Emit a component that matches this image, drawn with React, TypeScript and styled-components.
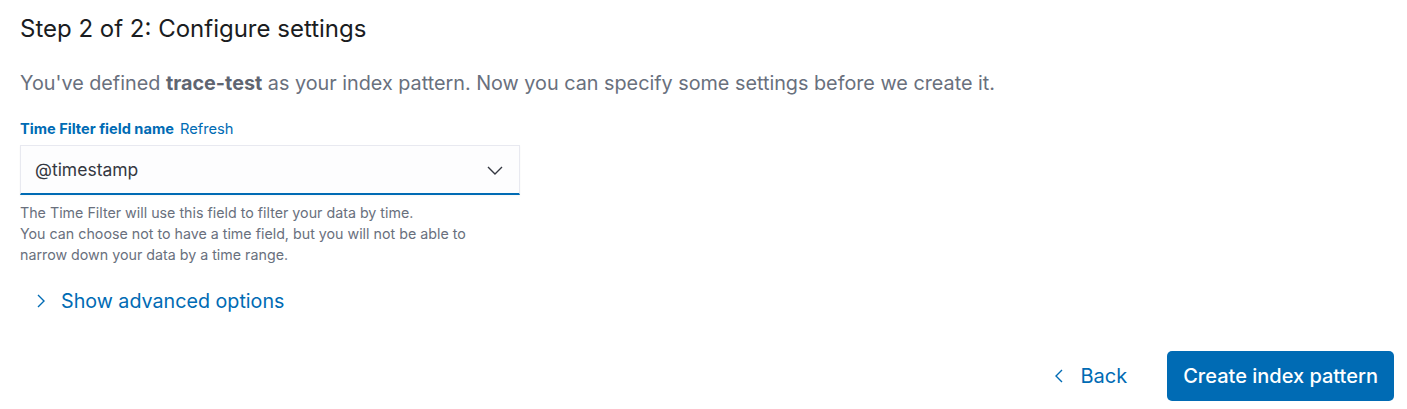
import React from "react";
import styled, { createGlobalStyle } from "styled-components";

const GlobalStyle = createGlobalStyle`
  html, body {
    margin: 0;
    padding: 0;
    background: #ffffff;
  }
  body {
    font-family: Inter, "Noto Sans", sans-serif;
    -webkit-font-smoothing: antialiased;
  }
`;

const Page = styled.div`
  width: 1407px;
  height: 409px;
  box-sizing: border-box;
  padding: 14px 13px 0 20px;
  display: flex;
  flex-direction: column;
`;

const Title = styled.h2`
  margin: 0;
  font-size: 24px;
  line-height: 30px;
  font-weight: 400;
  color: #1a1c21;
`;

const Intro = styled.p`
  margin: 24px 0 0;
  font-size: 19.8px;
  line-height: 30px;
  color: #69707d;

  strong {
    font-weight: 700;
    color: #5f6571;
  }
`;

const Field = styled.div`
  margin-top: 22px;
  width: 500px;
`;

const LabelRow = styled.div`
  display: flex;
  align-items: baseline;
  gap: 6px;
  height: 19px;
  margin-bottom: 6px;
`;

const Label = styled.label`
  font-size: 14.6px;
  font-weight: 700;
  color: #006bb4;
`;

const LinkText = styled.a`
  font-size: 14.7px;
  color: #006bb4;
  cursor: pointer;
`;

const SelectBox = styled.div`
  height: 50px;
  box-sizing: border-box;
  display: flex;
  align-items: center;
  justify-content: space-between;
  padding: 0 16px 0 14px;
  background: #fdfdfe;
  border: 1px solid #e8e9f0;
  border-bottom: 2px solid #006bb4;
  box-shadow: 0 1px 2px rgba(0, 0, 0, 0.04);
  font-size: 17.5px;
  color: #343741;
`;

const HelpText = styled.div`
  margin-top: 7px;
  width: 480px;
  font-size: 14.25px;
  line-height: 21px;
  color: #69707d;
`;

const Toggle = styled.button`
  margin: 24px 0 0 13px;
  padding: 0;
  border: 0;
  background: none;
  display: flex;
  align-items: center;
  gap: 12px;
  font-family: inherit;
  font-size: 19.7px;
  color: #006bb4;
  cursor: pointer;
  align-self: flex-start;
`;

const Footer = styled.div`
  margin-top: 38px;
  display: flex;
  justify-content: flex-end;
  align-items: center;
  gap: 30px;
`;

const EmptyButton = styled.button`
  border: 0;
  background: none;
  padding: 0 10px 0 12px;
  height: 50px;
  display: flex;
  align-items: center;
  gap: 13px;
  font-family: inherit;
  font-size: 20px;
  color: #006bb4;
  cursor: pointer;
`;

const PrimaryButton = styled.button`
  border: 0;
  border-radius: 5px;
  background: #006bb4;
  color: #ffffff;
  height: 50px;
  padding: 0 16px;
  min-width: 226px;
  font-family: inherit;
  font-size: 20px;
  font-weight: 500;
  cursor: pointer;
`;

const Chevron = ({ dir }: { dir: "down" | "right" | "left" }) => {
  const paths = {
    down: "M1 5 L8 12 L15 5",
    right: "M5 2 L11 8 L5 14",
    left: "M11 2 L5 8 L11 14",
  };
  return (
    <svg width="16" height="16" viewBox="0 0 16 16" fill="none">
      <path d={paths[dir]} stroke="currentColor" strokeWidth="1.4" />
    </svg>
  );
};

export default function App() {
  return (
    <>
      <GlobalStyle />
      <Page>
        <Title>Step 2 of 2: Configure settings</Title>
        <Intro>
          You've defined <strong>trace-test</strong> as your index pattern. Now
          you can specify some settings before we create it.
        </Intro>
        <Field>
          <LabelRow>
            <Label>Time Filter field name</Label>
            <LinkText>Refresh</LinkText>
          </LabelRow>
          <SelectBox>
            <span>@timestamp</span>
            <Chevron dir="down" />
          </SelectBox>
          <HelpText>
            The Time Filter will use this field to filter your data by time.
            <br />
            You can choose not to have a time field, but you will not be able to
            narrow down your data by a time range.
          </HelpText>
        </Field>
        <Toggle>
          <Chevron dir="right" />
          Show advanced options
        </Toggle>
        <Footer>
          <EmptyButton>
            <Chevron dir="left" />
            Back
          </EmptyButton>
          <PrimaryButton>Create index pattern</PrimaryButton>
        </Footer>
      </Page>
    </>
  );
}
